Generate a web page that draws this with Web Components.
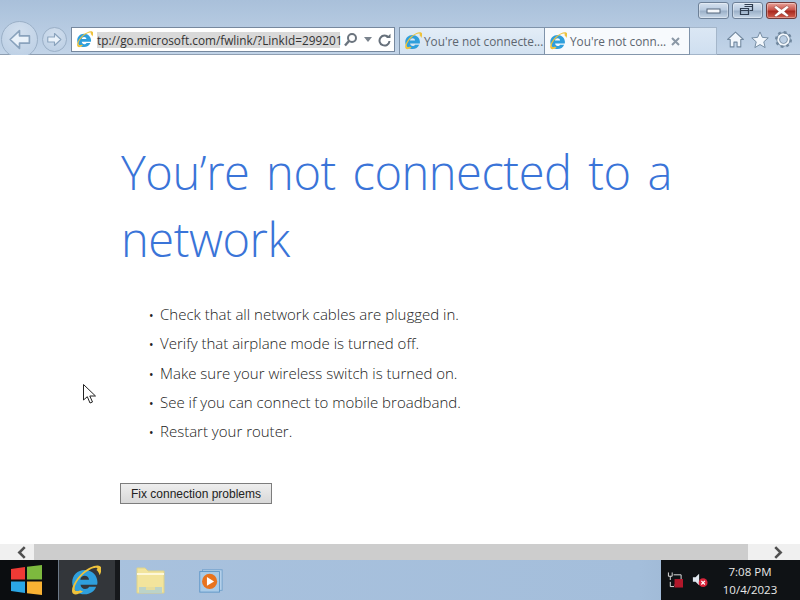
<!DOCTYPE html>
<html>
<head>
<meta charset="utf-8">
<title>You're not connected to a network</title>
<style>
html,body{margin:0;height:100%;overflow:hidden;background:#fff;}
body{font-family:"Open Sans","Liberation Sans",sans-serif;}
#app{display:flex;flex-direction:column;width:800px;height:600px;position:relative;overflow:hidden;}
</style>
</head>
<body>
<div id="app">
  <ie-toolbar></ie-toolbar>
  <error-page>
    <li>Check that all network cables are plugged in.</li>
    <li>Verify that airplane mode is turned off.</li>
    <li>Make sure your wireless switch is turned on.</li>
    <li>See if you can connect to mobile broadband.</li>
    <li>Restart your router.</li>
  </error-page>
  <h-scroll></h-scroll>
  <task-bar></task-bar>
  <mouse-cursor></mouse-cursor>
</div>
<script>
class IeLogo extends HTMLElement {
  connectedCallback() {
    const s = this.getAttribute("size") || 16;
    this.attachShadow({ mode: "open" }).innerHTML = `
<style>:host{display:inline-flex;flex:none;width:${s}px;height:${s}px}svg{width:100%;height:100%}</style>
<svg viewBox="2.500 2 28 28">
  <path d="M15.800 6.500C9.300 6.500 4.500 11.300 4.500 17.500S9.300 28.500 15.800 28.500c4.900 0 8.700-2.600 10.300-6.800h-6.300c-.8 1.300-2 2-3.700 2-2.200 0-3.800-1.400-4.100-3.800H27c.2-.8.300-1.500.3-2.300C27.300 11.200 22.300 6.500 15.800 6.500zm-4 8.800c.4-2 1.900-3.500 4-3.500s3.600 1.400 3.900 3.500z" fill="#2f9fdc"/>
  <path d="M5.500 28C1.500 24.500 8.500 13 14 8.700c5-4 12.500-7.700 15.700-5.500 1.900 1.300 1.400 4.500-.4 8-.6-2.200-1.700-3.700-3-4.600 1-.8 1.200-1.500.6-1.900-2-1.300-8 1.700-12.400 5.700C9.500 15 5 22.500 7.300 25c.8.800 2.500.6 4.500-.3.700.5 1.500 1 2.500 1.300-3.300 2-7 3.700-8.800 2z" fill="#eec23c"/>
</svg>`;
  }
}
customElements.define("ie-logo", IeLogo);

class CapButton extends HTMLElement {
  connectedCallback() {
    const kind = this.getAttribute("kind");
    const glyph = {
      min: `<rect x="4" y="6" width="13" height="4" fill="#f4f7fb" stroke="#55667c"/>`,
      max: `<path d="M7.500 1.500h8v6h-3M3.500 5.500h8v6h-8zM3.500 7.500h8M7.500 3.500h8" fill="none" stroke="#2f3d50" stroke-width="1.200"/>`,
      close: `<path d="M5 2.500l5.500 4 5.500-4 2 2-4.500 4 4.500 4-2 1.500-5.500-3.500L5 14 3 12.500l4.500-4L3 4.500z" fill="#fff" stroke="#7d2a22" stroke-width=".5"/>`
    }[kind];
    const bg = kind === "close"
      ? "linear-gradient(#e9a39a,#c9544a 45%,#a8291f 55%,#d3604f)"
      : "linear-gradient(#d5e1ef,#b9cbe0 45%,#9cb1c9 55%,#c7d7e8)";
    this.attachShadow({ mode: "open" }).innerHTML = `
<style>
:host{display:flex;align-items:center;justify-content:center;box-sizing:border-box;width:31px;height:17px;
  background:${bg};border:1px solid ${kind === "close" ? "#6e3b3b" : "#6d8097"};border-radius:3px;box-shadow:inset 0 0 0 1px rgba(255,255,255,.35)}
svg{width:21px;height:16px}
</style>
<svg viewBox="0 0 21 16">${glyph}</svg>`;
  }
}
customElements.define("cap-button", CapButton);

class NavArrow extends HTMLElement {
  connectedCallback() {
    const big = this.hasAttribute("big");
    const d = big ? 37 : 25;
    const flip = this.getAttribute("dir") === "right" ? "scale(-1,1) translate(-24,0)" : "";
    this.attachShadow({ mode: "open" }).innerHTML = `
<style>
:host{display:flex;flex:none;align-items:center;justify-content:center;box-sizing:border-box;width:${d}px;height:${d}px;border-radius:50%;
  border:1.500px solid #9bb0c7;background:radial-gradient(circle at 50% 30%,#d2dfee,#b9cde3)}
svg{width:${big ? 25 : 17}px;height:${big ? 25 : 17}px}
</style>
<svg viewBox="0 0 24 24"><path transform="${flip}" d="M3 12L12 3.500V8.500H21.500V15.500H12V20.500Z" fill="#eaf2fa" stroke="#8aa3bd" stroke-width="1.600" stroke-linejoin="round"/></svg>`;
  }
}
customElements.define("nav-arrow", NavArrow);

class IeTab extends HTMLElement {
  connectedCallback() {
    const active = this.hasAttribute("active");
    this.attachShadow({ mode: "open" }).innerHTML = `
<style>
:host{display:flex;flex:none;align-items:center;box-sizing:border-box;height:28px;width:${active ? 145 : 146}px;padding:0 8px 0 4px;gap:${active ? 3 : 2}px;
  background:${active ? "#f7fafd" : "linear-gradient(#e3edf7,#d3e2f1)"};border:1px solid #7f93aa;border-bottom:1px solid #8496ab;border-left-width:${active ? 0 : 1}px;
  font:11.800px "Open Sans","Liberation Sans",sans-serif;color:#5d6670;white-space:nowrap}
span{flex:1;white-space:nowrap}
svg{flex:none;margin-right:1px}
</style>
<ie-logo size="18"></ie-logo><span><slot></slot></span>${active ? `<svg width="9" height="9" viewBox="0 0 9 9"><path d="M1 1l7 7M8 1L1 8" stroke="#8b98a6" stroke-width="2"/></svg>` : ""}`;
  }
}
customElements.define("ie-tab", IeTab);

class IeToolbar extends HTMLElement {
  connectedCallback() {
    this.attachShadow({ mode: "open" }).innerHTML = `
<style>
:host{display:flex;flex-direction:column;flex:none;height:55px;box-sizing:border-box;background:linear-gradient(#a9c0da,#c2d4e8);border-bottom:1px solid #8f9fb2}
.caps{display:flex;justify-content:flex-end;gap:3px;height:27px;padding:2px 3px 0 0;box-sizing:border-box}
.nav{display:flex;align-items:flex-start;height:27px}
.arrows{display:flex;align-items:center;gap:4px;width:71px;padding-left:1px;box-sizing:border-box;margin-top:-7px;height:38px;flex:none}
.addr{display:flex;align-items:center;box-sizing:border-box;width:324px;height:25px;background:#fff;border:1px solid #76889e;padding:0 3px 0 4px;flex:none;
  font:11.800px "Open Sans","Liberation Sans",sans-serif;color:#333}
.url{background:#d9d9d9;margin-left:4px;white-space:nowrap;line-height:16px;width:243px;text-align:left}
.tools{display:flex;align-items:center;margin-left:3px;gap:6px;color:#6c7782}
.tabs{display:flex;margin-left:4px}
.new{width:27px;height:28px;box-sizing:border-box;background:linear-gradient(#dbe7f4,#cfdff0);border:1px solid #a4b6ca;border-left:0}
.right{display:flex;align-items:center;gap:6px;margin-left:9px;height:25px}
svg{display:block}
</style>
<div class="caps"><cap-button kind="min"></cap-button><cap-button kind="max"></cap-button><cap-button kind="close"></cap-button></div>
<div class="nav">
  <div class="arrows"><nav-arrow big></nav-arrow><nav-arrow dir="right"></nav-arrow></div>
  <div class="addr"><ie-logo size="17"></ie-logo><span class="url">tp://go.microsoft.com/fwlink/?LinkId=299201</span>
    <div class="tools">
      <svg width="15" height="15" viewBox="0 0 15 15"><circle cx="9" cy="6" r="4" fill="none" stroke="#6b747e" stroke-width="2"/><path d="M6 9l-4 4.500" stroke="#6b747e" stroke-width="2.400"/></svg>
      <svg width="8" height="5" viewBox="0 0 8 5"><path d="M0 0h8L4 5z" fill="#7a838d"/></svg>
      <svg width="13" height="14" viewBox="0 0 13 14"><path d="M10.500 4.500A5 5 0 1 0 11.500 8" fill="none" stroke="#66707b" stroke-width="2"/><path d="M8 5h4.500V.8z" fill="#66707b"/></svg>
    </div>
  </div>
  <div class="tabs"><ie-tab>You're not connecte...</ie-tab><ie-tab active>You're not conn...</ie-tab><div class="new"></div></div>
  <div class="right">
    <svg width="19" height="19" viewBox="0 0 18 18"><path d="M9 2L1.500 9H4v7h3.500v-4.500h3V16H14V9h2.500z" fill="#f2f7fc" stroke="#71889f" stroke-linejoin="round"/></svg>
    <svg width="18" height="18" viewBox="0 0 19 19"><path d="M9.500 1l2.500 5.700 6.200.6-4.700 4.100 1.400 6.100-5.400-3.200-5.400 3.200 1.400-6.100L.8 7.300 7 6.700z" fill="#f2f7fc" stroke="#71889f" stroke-linejoin="round"/></svg>
    <svg width="17" height="17" viewBox="0 0 17 17"><circle cx="8.500" cy="8.500" r="5.300" fill="none" stroke="#71889f" stroke-width="3.800"/><circle cx="8.500" cy="8.500" r="5.300" fill="none" stroke="#f2f7fc" stroke-width="2"/><circle cx="8.500" cy="8.500" r="7.300" fill="none" stroke="#71889f" stroke-width="2.400" stroke-dasharray="2.800 2.930"/></svg>
  </div>
</div>`;
  }
}
customElements.define("ie-toolbar", IeToolbar);

class ErrorPage extends HTMLElement {
  connectedCallback() {
    this.attachShadow({ mode: "open" }).innerHTML = `
<style>
:host{display:block;flex:1;min-height:0;background:#fff;box-sizing:border-box;padding:84px 0 0 121px;overflow:hidden}
h1{margin:0;width:600px;font:300 47px/67px "Open Sans","Liberation Sans",sans-serif;color:#3a74d8;letter-spacing:-.45px;word-spacing:5px}
ul{margin:27px 0 0;padding:0 0 0 39px;list-style:none;font:300 15px/29.250px "Open Sans","Liberation Sans",sans-serif;color:#222}
::slotted(li)::before{content:"•";display:inline-block;width:11px;margin-left:-11px;font-size:12px;line-height:0;font-weight:400}
button{display:block;margin:37px 0 0 -1px;width:152px;height:21px;padding:0;background:linear-gradient(#eeeeee,#d8d8d8);border:1px solid #7d7d7d;
  font:12px "Liberation Sans",sans-serif;color:#222}
</style>
<h1>You’re not connected to a network</h1>
<ul><slot></slot></ul>
<button>Fix connection problems</button>`;
  }
}
customElements.define("error-page", ErrorPage);

class HScroll extends HTMLElement {
  connectedCallback() {
    this.attachShadow({ mode: "open" }).innerHTML = `
<style>
:host{display:flex;flex:none;height:16px;background:#f0f0f0;align-items:stretch}
.end{width:34px;display:flex;align-items:center;justify-content:center;flex:none;padding-left:8px;box-sizing:border-box}
.end+.thumb{flex:none;width:714px;background:#cdcdcd}
.last{width:52px}
</style>
<div class="end"><svg width="11" height="13" viewBox="0 0 10 12"><path d="M8 1L3 6l5 5" fill="none" stroke="#505050" stroke-width="2.400"/></svg></div>
<div class="thumb"></div>
<div class="end last"><svg width="11" height="13" viewBox="0 0 10 12"><path d="M2 1l5 5-5 5" fill="none" stroke="#505050" stroke-width="2.400"/></svg></div>`;
  }
}
customElements.define("h-scroll", HScroll);

class TaskBar extends HTMLElement {
  connectedCallback() {
    this.attachShadow({ mode: "open" }).innerHTML = `
<style>
:host{display:flex;flex:none;height:40px;background:linear-gradient(90deg,#a9c2de,#a4bedb 80%,#90a9c4);font:11.500px "Open Sans","Liberation Sans",sans-serif;color:#fff}
.start{width:58px;background:#0b0d10;display:flex;align-items:center;justify-content:center;padding-right:5px;box-sizing:border-box}
.ie{width:57px;background:#33363a;display:flex;align-items:center;justify-content:center;border-left:1px solid #6d7a88;padding-right:3px;box-sizing:border-box}
.sep{width:5px;background:#16181b}
.pins{flex:1;display:flex;align-items:center;padding-left:16px;gap:33px}
.tray{width:139px;background:#0f1215;display:flex;align-items:center;box-sizing:border-box;padding-left:6px;gap:9px}
.clock{margin-left:1px;padding-top:2px;text-align:center;line-height:18px;width:64px;color:#e8e8e8}
</style>
<div class="start">
<svg width="31" height="30" viewBox="0 0 31 30">
  <path d="M0 4l14-2v12.500H0z" fill="#ee3a35"/><path d="M16 1.700L31 0v14.500H16z" fill="#7db93e"/>
  <path d="M0 16.500h14V28L0 26z" fill="#2ba7e6"/><path d="M16 16.500h15V30l-15-1.700z" fill="#f9b233"/>
</svg></div>
<div class="ie"><ie-logo size="31"></ie-logo></div>
<div class="sep"></div>
<div class="pins">
  <svg width="29" height="27" viewBox="0 0 29 27"><path d="M1 1h8l3 3h16v22H1z" fill="#f2e49c" stroke="#dcd28c"/><rect x="1" y="6" width="27" height="2" fill="#fdf7d8"/><rect x="3" y="20" width="23" height="6" fill="#bcd3c8"/><rect x="10" y="20" width="9" height="3" fill="#e6dd9c"/></svg>
  <svg width="25" height="25" viewBox="0 0 28 28"><rect x="5" y="2" width="22" height="23" fill="#b5d0ea" stroke="#6fa0cb"/><rect x="2" y="4" width="22" height="23" fill="#a9cbe8" stroke="#5b94c6"/><circle cx="13" cy="15" r="8.500" fill="#e8731f"/><path d="M10 10l8 5-8 5z" fill="#fff"/></svg>
</div>
<div class="tray">
  <svg width="16" height="18" viewBox="0 0 17 18"><path d="M1.500 1v4h4V1M3.500 5v4" fill="none" stroke="#e6e6e6"/><path d="M7 3.500h8v11H8M3.500 11v5h4" fill="none" stroke="#e6e6e6"/><rect x="8" y="8" width="9" height="9" fill="#b2182b"/></svg>
  <svg width="16" height="18" viewBox="0 0 18 18"><path d="M1 6h3l4-4v13l-4-4H1z" fill="#dfe6ee"/><circle cx="12.500" cy="12" r="5" fill="#d8243a"/><path d="M10.500 10l4 4m0-4l-4 4" stroke="#fff" stroke-width="1.400"/></svg>
  <div class="clock">7:08 PM<br>10/4/2023</div>
</div>`;
  }
}
customElements.define("task-bar", TaskBar);

class MouseCursor extends HTMLElement {
  connectedCallback() {
    this.attachShadow({ mode: "open" }).innerHTML = `
<style>:host{position:absolute;left:83px;top:384px;width:14px;height:20px}svg{display:block}</style>
<svg width="14" height="20" viewBox="0 0 14 20"><path d="M.5.500V16l3.800-3.300L7 19l2.500-1-2.700-6H12.500z" fill="#fff" stroke="#222" stroke-linejoin="round"/></svg>`;
  }
}
customElements.define("mouse-cursor", MouseCursor);
</script>
</body>
</html>
